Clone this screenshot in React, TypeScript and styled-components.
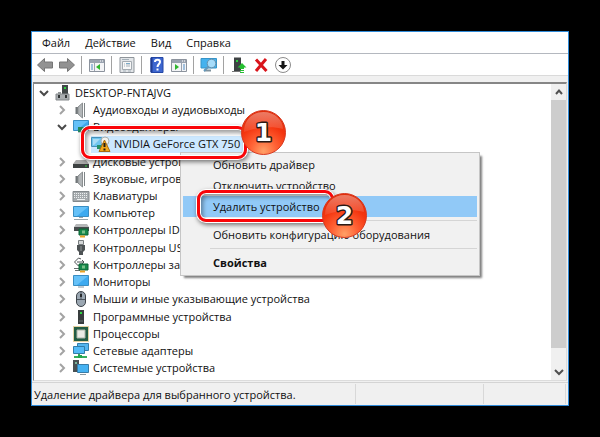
import React from "react";
import styled, { createGlobalStyle, css } from "styled-components";

const GlobalStyle = createGlobalStyle`
  *, *::before, *::after { box-sizing: border-box; }
  body { margin: 0; background: #000; }
  button { font: inherit; color: inherit; background: none; border: 0; padding: 0; margin: 0; }
  svg { display: block; flex: none; overflow: visible; }
`;

const Stage = styled.div`
  position: relative;
  display: flex;
  min-height: 100vh;
  padding: 31px;
  background: #000;
  color: #111;
  font-family: "Open Sans", "Noto Sans", sans-serif;
  font-size: 11px;
  line-height: 16px;
`;

const Window = styled.main`
  display: flex;
  flex: 1;
  flex-direction: column;
  min-width: 0;
  background: #f0f0f0;
  border: 1px solid #2f8ad8;
`;

const MenuBar = styled.nav`
  display: flex;
  align-items: center;
  gap: 15px;
  height: 22px;
  padding: 0 10px;
  background: #fff;
  border-bottom: 1px solid #b4b8bf;
`;

const MenuButton = styled.button`
  white-space: nowrap;
`;

const Toolbar = styled.div`
  display: flex;
  align-items: center;
  height: 22px;
  padding: 0 5px;
  gap: 6px;
  background: #fff;
  border-bottom: 1px solid #dadada;
`;

const ToolButton = styled.button`
  width: 16px;
  height: 16px;
`;

const ToolDivider = styled.span`
  width: 1px;
  height: 18px;
  margin-right: 1px;
  background: #a2a2a2;
`;

const TreePane = styled.section`
  display: flex;
  flex: 1;
  margin: 6px 1px 1px;
  background: #fff;
  border: 1px solid #dcdcdc;
  border-top: 2px solid #868686;
  border-left: 1px solid #868686;
`;

const Tree = styled.ul`
  display: grid;
  flex: 1;
  grid-auto-rows: 1fr;
  min-width: 0;
  margin: 0;
  padding: 0 0 3px;
  list-style: none;
`;

const indents = [4, 22, 57];

const TreeRow = styled.li<{ $level: number }>`
  display: flex;
  align-items: center;
  padding-left: ${({ $level }) => indents[$level]}px;
`;

const Twisty = styled.button<{ $open?: boolean }>`
  display: grid;
  place-items: center;
  width: 12px;
  height: 12px;
  margin-right: 5px;
  color: ${({ $open }) => ($open ? "#4a4a4a" : "#a3a3a3")};
`;

const TreeLabel = styled.span`
  margin-left: 4px;
  white-space: nowrap;
`;

const SelectedItem = styled.div`
  position: relative;
  display: flex;
  align-items: center;
  height: 17px;
  padding-right: 3px;
  background: #cce8ff;
`;

const ScrollBar = styled.div`
  display: flex;
  flex-direction: column;
  width: 15px;
  background: #f0f0f0;
`;

const ScrollButton = styled.button`
  display: grid;
  place-items: center;
  height: 16px;
  color: #505050;
`;

const ScrollTrack = styled.div`
  flex: 1;
`;

const ScrollThumb = styled.div`
  height: 94%;
  background: #cdcdcd;
`;

const StatusBar = styled.footer`
  display: grid;
  grid-template-columns: 324fr 128fr 82fr;
  height: 23px;
  padding: 1px 2px 1px 0;
  border-top: 1px solid #d4d4d4;
`;

const StatusCell = styled.div`
  padding: 3px 2px 0;
  overflow: hidden;
  white-space: nowrap;
  border-right: 1px solid #d8d8d8;
`;

const ContextMenu = styled.div`
  position: absolute;
  top: 152px;
  left: 180px;
  z-index: 2;
  display: flex;
  flex-direction: column;
  width: 300px;
  padding: 1px 2px 2px;
  background: #f1f1f1;
  border: 1px solid #c6c6c6;
  box-shadow: 3px 3px 2px -1px rgba(0, 0, 0, 0.5);
`;

const MenuItem = styled.button<{ $active?: boolean; $strong?: boolean }>`
  height: 21px;
  padding-left: 30px;
  text-align: left;
  white-space: nowrap;
  ${({ $active }) => $active && css`
    position: relative;
    background: #91c9f7;
  `}
  ${({ $strong }) => $strong && css`font-weight: 700;`}
`;

const MenuRule = styled.hr`
  height: 1px;
  margin: 3px 0 3px 27px;
  border: 0;
  background: #d5d5d5;
`;

const Highlight = styled.span<{ $inset: string }>`
  position: absolute;
  inset: ${({ $inset }) => $inset};
  z-index: 3;
  border: 3px solid #fa0508;
  border-radius: 9px;
  pointer-events: none;
  box-shadow:
    0 0 0 1px #fff,
    1px 2px 4px 1px rgba(0, 0, 0, 0.5),
    inset 0 0 0 1px #fff,
    inset 2px 3px 4px 1px rgba(0, 0, 0, 0.38);
`;

const Badge = styled.span<{ $top: number; $right: number }>`
  position: absolute;
  top: ${({ $top }) => $top}px;
  right: ${({ $right }) => $right}px;
  width: 45px;
  height: 45px;
`;

const Step = ({ n, top, right }: { n: number; top: number; right: number }) => (
  <Badge $top={top} $right={right}>
    <svg width="45" height="45" viewBox="0 0 45 45" role="img" aria-label={String(n)}>
      <defs>
        <radialGradient id={`ball${n}`} cx="50%" cy="92%" r="85%">
          <stop offset="0" stopColor="#ffa066" />
          <stop offset=".35" stopColor="#ff6235" />
          <stop offset=".7" stopColor="#f4350f" />
          <stop offset="1" stopColor="#e22c08" />
        </radialGradient>
        <linearGradient id={`gloss${n}`} x1="0" y1="0" x2="0" y2="1">
          <stop offset="0" stopColor="#fff" stopOpacity=".38" />
          <stop offset="1" stopColor="#fff" stopOpacity=".08" />
        </linearGradient>
      </defs>
      <circle cx="22.500" cy="22.500" r="22" fill={`url(#ball${n})`} stroke="#d73a22" />
      <path d="M3 22C3 10 11 2 22.500 2S42 10 42 19C31 16 16 17 3 22Z" fill={`url(#gloss${n})`} />
      <text
        x="22.500"
        y="31"
        textAnchor="middle"
        fontFamily="DejaVu Sans"
        fontWeight="700"
        fontSize="25"
        fill="#fff"
        stroke="#2b1a16"
        strokeWidth="3"
        strokeLinejoin="round"
        paintOrder="stroke"
      >
        {n}
      </text>
    </svg>
  </Badge>
);

const Icon = ({ size = 16, children }: { size?: number; children: React.ReactNode }) => (
  <svg width={size} height={size} viewBox="0 0 16 16" aria-hidden="true">{children}</svg>
);

const Chevron = ({ dir, w = 2 }: { dir: "up" | "down" | "right"; w?: number }) => {
  const d = { up: "M2 7 5 3.500 8 7", down: "M1 3 5 7 9 3", right: "M3 1 7 5 3 9" }[dir];
  return (
    <svg width="10" height="10" viewBox="0 0 10 10" aria-hidden="true">
      <path d={d} fill="none" stroke="currentColor" strokeWidth={w} />
    </svg>
  );
};

const ArrowIcon = ({ flip }: { flip?: boolean }) => (
  <Icon>
    <path
      d="M.5 8 7.500 1.500V5H15.500V11H7.500V14.500Z"
      transform={flip ? "matrix(-1 0 0 1 16 0)" : undefined}
      fill="#929292"
      stroke="#767676"
      strokeLinejoin="round"
    />
  </Icon>
);

const PaneIcon = ({ right }: { right?: boolean }) => (
  <Icon>
    <path d="M.5 2.500h15v12H.5z" fill="#f3f4f6" stroke="#8c939d" />
    <path d="M1 3h14v3H1z" fill="#9aa3b0" />
    <path d="M11 4h1M13 4h1" stroke="#fff" />
    {right ? (
      <>
        <path d="M10.500 6v8" stroke="#9aa3b0" />
        <path d="M12 8h2M12 10h2M12 12h2" stroke="#4e8bc4" />
        <path d="M4 7v6l4-3z" fill="#2eb52e" />
      </>
    ) : (
      <>
        <path d="M5.500 6v8" stroke="#9aa3b0" />
        <path d="M2 8h2M2 10h2M2 12h2" stroke="#4e8bc4" />
        <path d="M11 7v6L7 10z" fill="#2eb52e" />
      </>
    )}
  </Icon>
);

const PropsIcon = () => (
  <Icon>
    <path d="M1 .5h14v15H1z" fill="#e2e5e8" stroke="#8f959b" />
    <path d="M3.500 4.500h9v8h-9z" fill="#f8f8f8" stroke="#a4abb1" />
    <path d="M3 2.500h7M5 7h1M7 7h4M5 9h1M7 9h4M4 14h3M9 14h3" stroke="#a5b0b9" />
    <path d="M7 6h4v1H7z" fill="#7cabc9" />
  </Icon>
);

const HelpIcon = () => (
  <Icon>
    <path d="M2 .5h12v15H2z" fill="#3d66cf" stroke="#2447a5" />
    <path d="M2.500 1v14" stroke="#1f3b92" strokeWidth="2" />
    <path d="M6 5c0-3 5-3 5 0 0 2-2.500 2-2.500 5" fill="none" stroke="#fff" strokeWidth="2" />
    <path d="M7.500 11.500h2v2h-2z" fill="#fff" />
  </Icon>
);

const ScanIcon = () => (
  <Icon>
    <path d="M0 1.500h15.500v9.500H0z" fill="#45b2ee" stroke="#3794c8" />
    <path d="M3 13.500h7" stroke="#7f929e" strokeWidth="2" />
    <path d="m8 9-5 5" stroke="#6399bc" strokeWidth="2" />
    <circle cx="10.500" cy="6.500" r="4.300" fill="#a6dcfa" stroke="#668fac" />
  </Icon>
);

const UpdateIcon = () => (
  <Icon>
    <path d="M3 .5h7v14H3z" fill="#3d4243" />
    <path d="M1 14h8v1H1z" fill="#777" />
    <path d="M5 3h2v2H5z" fill="#2dd140" />
    <path d="m11 6 4.500 4.500H13V12H9v-1.500H6.500zM9 13h4v1H9zM9 15h4v1H9z" fill="#26bf31" />
  </Icon>
);

const RemoveIcon = () => (
  <Icon>
    <path d="M3 2.500 13.500 14M13 2 3 14" stroke="#d9141b" strokeWidth="3" />
  </Icon>
);

const DisableIcon = () => (
  <Icon>
    <circle cx="8" cy="8" r="7.500" fill="#fff" stroke="#8b8b8b" />
    <path d="M6.500 4h3v4h3L8 12.500 3.500 8h3z" fill="#151515" />
  </Icon>
);

const Board = () => (
  <>
    <path d="M6 7h9v6H6z" fill="#16894b" stroke="#0b6335" />
    <path d="M9 8.500h3v3H9z" fill="#79bf89" />
    <path d="M7 14.500h5" stroke="#e8a326" strokeWidth="2" />
  </>
);

const Screen = ({ stand = false }: { stand?: boolean }) => (
  <>
    <path d="M.5 1.500h15v10H.5z" fill="#3daaf0" stroke="#398ec3" />
    <path d="M1 2h14L4 11H1z" fill="#65c1f8" />
    {stand ? (
      <>
        <path d="M6 12.500h4" stroke="#98a5ac" />
        <path d="M1 14.500h14" stroke="#98a5ac" />
      </>
    ) : (
      <path d="M5 13h6" stroke="#8796a0" />
    )}
  </>
);

const ICONS: Record<string, React.ReactNode> = {
  pc: (
    <>
      <path d="M7 0h6v11H7z" fill="#414748" />
      <path d="M9 2h2v2H9z" fill="#2fd33f" />
      <path d="M1 9h13v6H1z" fill="#a9adb0" stroke="#85898c" />
      <path d="M3 7h3v3H3z" fill="#949899" />
      <path d="M4 10v3M11 10v3" stroke="#303435" strokeWidth="2" />
    </>
  ),
  sound: (
    <>
      <path d="M2.500 5h3v7h-3z" fill="#717678" />
      <path d="M5 5 9.500 1v15L5 12z" fill="#b2b6b8" stroke="#8b8f91" />
      <path d="M11.500 1v14" stroke="#7f8587" />
    </>
  ),
  display: (
    <>
      <Screen />
      <path d="M5 8h8v5H5z" fill="#258a5c" />
    </>
  ),
  disk: (
    <>
      <path d="M3 6h10l3 4H0z" fill="#aaa" />
      <path d="M0 10h16v4H0z" fill="#3d4141" />
      <path d="M12 12h2" stroke="#38d548" />
    </>
  ),
  keyboard: (
    <>
      <path d="M0 3.500h16v10H0z" fill="#a5aaad" stroke="#83898c" />
      <path d="M1 5.500h14M1 7.500h14M1 9.500h14" stroke="#edf0f1" strokeDasharray="1 1" />
      <path d="M4 11.500h8" stroke="#edf0f1" />
    </>
  ),
  computer: <Screen stand />,
  ide: (
    <>
      <path d="M3 2h11l2 3H1z" fill="#b5b7b8" />
      <path d="M1 5h15v4H1z" fill="#474c4d" />
      <Board />
    </>
  ),
  usb: (
    <>
      <path d="M5.500.5h5v4h-5z" fill="#d5d8d9" stroke="#777c7e" />
      <path d="M4 5h8v5l-2 2v3H6v-3l-2-2z" fill="#4d5254" />
      <path d="M8 6v5" stroke="#93999b" />
    </>
  ),
  storage: (
    <>
      <path d="M8 2 5.500 1 1.500 5l4 4 3-3M4 5h7M9 3l2 2-2 2" fill="none" stroke="#4d5254" />
      <path d="M1 11.500h6M2 13.500h5" stroke="#686d6f" />
      <Board />
    </>
  ),
  monitor: <Screen />,
  mouse: (
    <>
      <rect x="3.500" y=".5" width="9" height="15" rx="4.500" fill="#9ba7b2" stroke="#3d4349" />
      <path d="M8 1v7M4 8.500h8" stroke="#4b535c" />
      <path d="M8 3v3" stroke="#26292c" strokeWidth="2" />
    </>
  ),
  tower: (
    <>
      <path d="M5 1h6v14H5z" fill="#383d3e" />
      <path d="M7 3h2v2H7z" fill="#31d743" />
      <path d="M6 12h4" stroke="#6d7475" />
    </>
  ),
  cpu: (
    <>
      <path d="M.5.5h15v15H.5z" fill="none" stroke="#c8a747" strokeDasharray="1 1" />
      <path d="M1 1h14v14H1z" fill="#245d44" />
      <path d="M4 4h8v8H4z" fill="#ecece5" stroke="#adb5a8" />
    </>
  ),
  network: (
    <>
      <path d="M4.500.5h11v7h-11z" fill="#54b6ef" stroke="#347fac" />
      <path d="M.5 3.500h11v7H.5z" fill="#54bbf7" stroke="#327da9" />
      <path d="M6 11v2M1 14h13" stroke="#35ae5c" strokeWidth="2" />
      <path d="M5 12h4v3H5z" fill="#22a64b" />
    </>
  ),
  system: (
    <>
      <path d="M0 0h6v12H0z" fill="#485052" />
      <path d="M2 2h2v2H2z" fill="#79b39a" />
      <path d="M4.500 4.500h11v8h-11z" fill="#45b2f2" stroke="#387ca7" />
      <path d="M7 14.500h6" stroke="#8a989f" />
    </>
  ),
};

const WarningDeviceIcon = () => (
  <svg width="19" height="16" viewBox="0 0 19 16" aria-hidden="true">
    <path d="M.5 1.500h10v9H.5z" fill="#6fc4ef" stroke="#4692ba" />
    <path d="M2 3h7L3 9H2z" fill="#a9dcf5" />
    <path d="M6 9h4v4H6z" fill="#269166" />
    <circle cx="14" cy="5" r="4" fill="#f3f2ee" stroke="#a9b0b1" />
    <path d="M13.500 4 19 15.500H8z" fill="#f2a91c" stroke="#a96c12" strokeLinejoin="round" />
    <path d="M13.500 7v4M13.500 12.500v2" stroke="#211b12" strokeWidth="2" />
  </svg>
);

const devices: [string, string][] = [
  ["sound", "Аудиовходы и аудиовыходы"],
  ["display", "Видеоадаптеры"],
  ["disk", "Дисковые устройства"],
  ["sound", "Звуковые, игровые и видеоустройства"],
  ["keyboard", "Клавиатуры"],
  ["computer", "Компьютер"],
  ["ide", "Контроллеры IDE ATA/ATAPI"],
  ["usb", "Контроллеры USB"],
  ["storage", "Контроллеры запоминающих устройств"],
  ["monitor", "Мониторы"],
  ["mouse", "Мыши и иные указывающие устройства"],
  ["tower", "Программные устройства"],
  ["cpu", "Процессоры"],
  ["network", "Сетевые адаптеры"],
  ["system", "Системные устройства"],
];

const tools: [string, React.ReactNode][][] = [
  [["Назад", <ArrowIcon />], ["Вперёд", <ArrowIcon flip />]],
  [["Дерево консоли", <PaneIcon />]],
  [["Параметры", <PropsIcon />]],
  [["Помощь", <HelpIcon />], ["Панель действий", <PaneIcon right />]],
  [["Сканировать", <ScanIcon />]],
  [["Обновить", <UpdateIcon />], ["Удалить", <RemoveIcon />], ["Отключить", <DisableIcon />]],
];

export default function App() {
  return (
    <>
      <GlobalStyle />
      <Stage>
        <Window>
          <MenuBar>
            {["Файл", "Действие", "Вид", "Справка"].map((m) => (
              <MenuButton key={m}>{m}</MenuButton>
            ))}
          </MenuBar>
          <Toolbar>
            {tools.map((group, i) => (
              <React.Fragment key={i}>
                {i > 0 && <ToolDivider />}
                {group.map(([label, icon]) => (
                  <ToolButton key={label} aria-label={label}>{icon}</ToolButton>
                ))}
              </React.Fragment>
            ))}
          </Toolbar>
          <TreePane>
            <Tree>
              <TreeRow $level={0}>
                <Twisty $open aria-label="Свернуть"><Chevron dir="down" /></Twisty>
                <Icon>{ICONS.pc}</Icon>
                <TreeLabel>DESKTOP-FNTAJVG</TreeLabel>
              </TreeRow>
              {devices.map(([icon, label]) => {
                const open = icon === "display";
                return (
                  <React.Fragment key={label}>
                    <TreeRow $level={1}>
                      <Twisty $open={open} aria-label={open ? "Свернуть" : "Развернуть"}>
                        <Chevron dir={open ? "down" : "right"} />
                      </Twisty>
                      <Icon>{ICONS[icon]}</Icon>
                      <TreeLabel>{label}</TreeLabel>
                    </TreeRow>
                    {open && (
                      <TreeRow $level={2}>
                        <SelectedItem>
                          <WarningDeviceIcon />
                          <TreeLabel>NVIDIA GeForce GTX 750</TreeLabel>
                          <Highlight $inset="-10px -4px -6px -10px">
                            <Step n={1} top={-19} right={-42} />
                          </Highlight>
                        </SelectedItem>
                      </TreeRow>
                    )}
                  </React.Fragment>
                );
              })}
            </Tree>
            <ScrollBar>
              <ScrollButton aria-label="Вверх"><Chevron dir="up" /></ScrollButton>
              <ScrollTrack><ScrollThumb /></ScrollTrack>
              <ScrollButton aria-label="Вниз"><Chevron dir="down" /></ScrollButton>
            </ScrollBar>
          </TreePane>
          <StatusBar>
            <StatusCell>Удаление драйвера для выбранного устройства.</StatusCell>
            <StatusCell />
            <StatusCell />
          </StatusBar>
        </Window>
        <ContextMenu>
          <MenuItem>Обновить драйвер</MenuItem>
          <MenuItem>Отключить устройство</MenuItem>
          <MenuItem $active>
            Удалить устройство
            <Highlight $inset="-6px 143px -5px 14px">
              <Step n={2} top={0} right={-36} />
            </Highlight>
          </MenuItem>
          <MenuRule />
          <MenuItem>Обновить конфигурацию оборудования</MenuItem>
          <MenuRule />
          <MenuItem $strong>Свойства</MenuItem>
        </ContextMenu>
      </Stage>
    </>
  );
}
